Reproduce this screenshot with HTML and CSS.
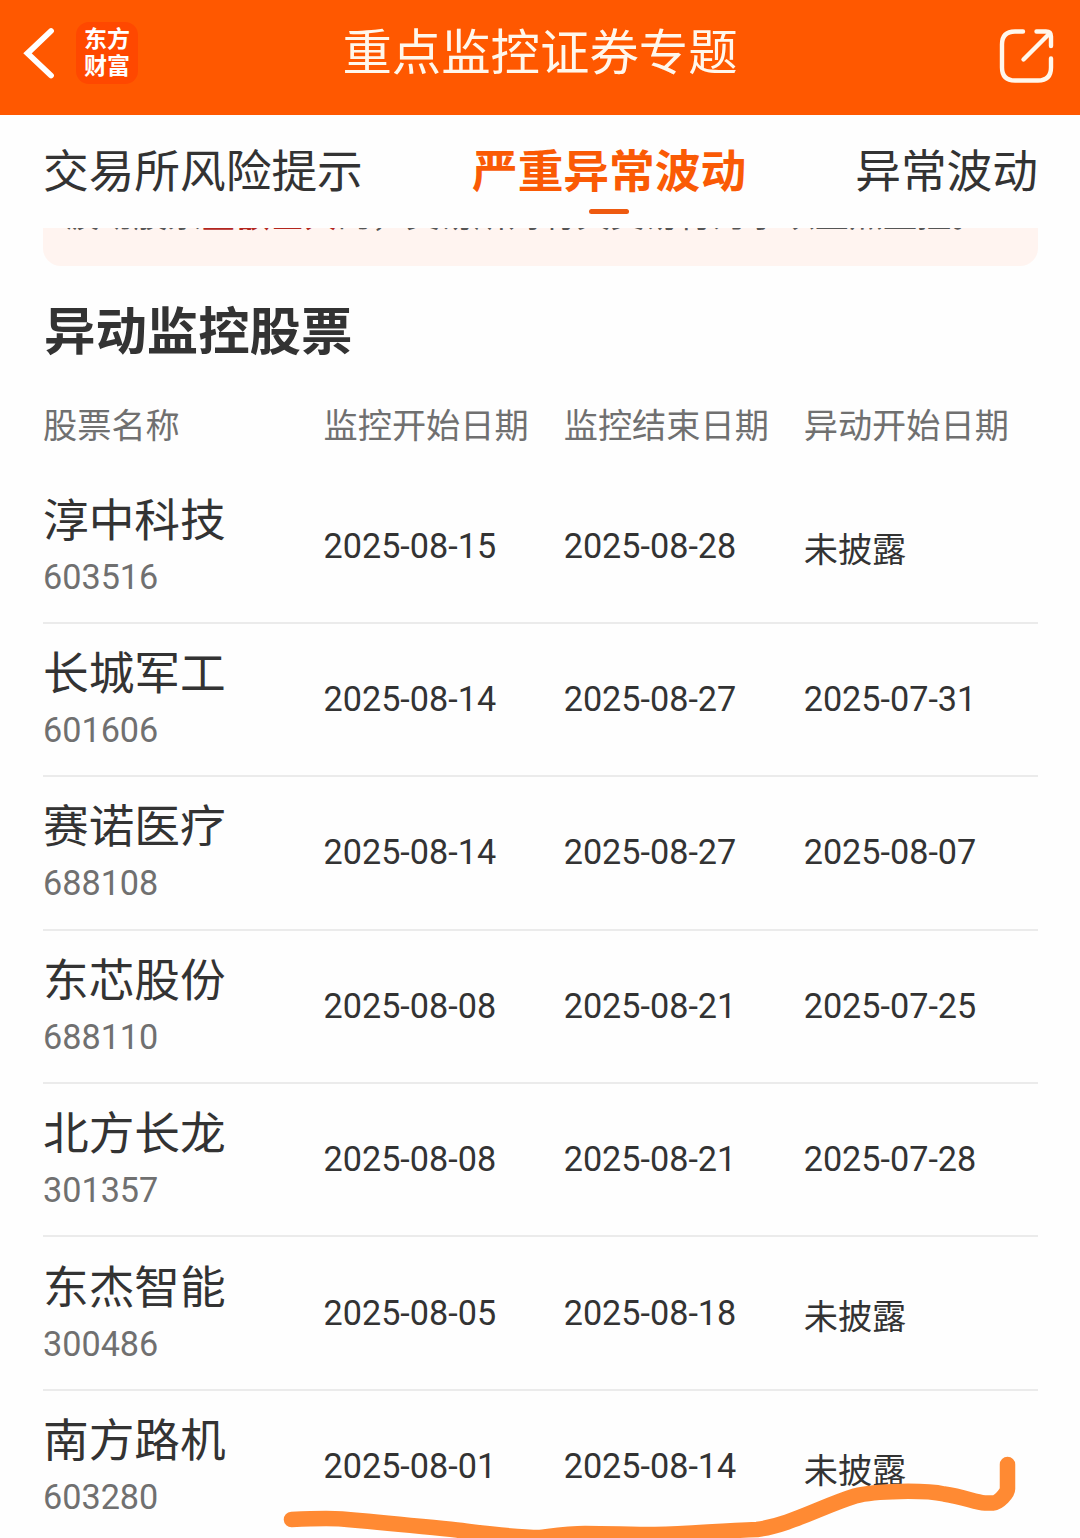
FILE: index.html
```html
<!DOCTYPE html>
<html lang="zh-CN">
<head>
  <meta charset="UTF-8">
  <meta name="viewport" content="width=device-width, initial-scale=1.0">
  <title>重点监控证券专题</title>
  <link rel="stylesheet" href="styles.css">
</head>
<body>
  <div class="page">
    <header class="topbar">
      <div class="left">
        <svg class="back" width="32" height="54" viewBox="0 0 32 54">
          <path d="M28 5 L4.500 27.300 L28 49.500" fill="none" stroke="#fff" stroke-width="5.8" stroke-linecap="round"/>
        </svg>
        <div class="logo"><span>东方</span><span>财富</span></div>
      </div>
      <h1>重点监控证券专题</h1>
      <svg class="share" width="60" height="60" viewBox="0 0 60 60">
        <g fill="none" stroke="#fff7ec" stroke-width="4.4" stroke-linecap="round" stroke-linejoin="round">
          <path d="M25 5.500 H17 Q4 5.500 4 18.500 V41.500 Q4 54.500 17 54.500 H40 Q53 54.500 53 41.500 V32.500"/>
          <path d="M38.500 5.500 H48 Q53 5.500 53 10.500 V20"/>
          <path d="M25.500 33.500 L51 8"/>
        </g>
      </svg>
    </header>

    <nav class="tabs">
      <a>交易所风险提示</a>
      <a class="active">严重异常波动</a>
      <a>异常波动</a>
    </nav>

    <div class="notice">
      <p>波动股票<em>金额巨大</em>的，交易所对有关交易行为予以重点监控。</p>
    </div>

    <h2>异动监控股票</h2>

    <div class="table">
      <div class="row head">
        <div>股票名称</div>
        <div>监控开始日期</div>
        <div>监控结束日期</div>
        <div>异动开始日期</div>
      </div>
      <div class="row">
        <div class="stock"><b>淳中科技</b><span>603516</span></div>
        <div>2025-08-15</div>
        <div>2025-08-28</div>
        <div class="none">未披露</div>
      </div>
      <div class="row">
        <div class="stock"><b>长城军工</b><span>601606</span></div>
        <div>2025-08-14</div>
        <div>2025-08-27</div>
        <div>2025-07-31</div>
      </div>
      <div class="row">
        <div class="stock"><b>赛诺医疗</b><span>688108</span></div>
        <div>2025-08-14</div>
        <div>2025-08-27</div>
        <div>2025-08-07</div>
      </div>
      <div class="row">
        <div class="stock"><b>东芯股份</b><span>688110</span></div>
        <div>2025-08-08</div>
        <div>2025-08-21</div>
        <div>2025-07-25</div>
      </div>
      <div class="row">
        <div class="stock"><b>北方长龙</b><span>301357</span></div>
        <div>2025-08-08</div>
        <div>2025-08-21</div>
        <div>2025-07-28</div>
      </div>
      <div class="row">
        <div class="stock"><b>东杰智能</b><span>300486</span></div>
        <div>2025-08-05</div>
        <div>2025-08-18</div>
        <div class="none">未披露</div>
      </div>
      <div class="row">
        <div class="stock"><b>南方路机</b><span>603280</span></div>
        <div>2025-08-01</div>
        <div>2025-08-14</div>
        <div class="none">未披露</div>
      </div>
    </div>

    <!-- marker stroke drawn over the last row -->
    <svg class="marker" width="1080" height="118" viewBox="0 0 1080 118">
      <path d="M291.500 99.500 C312 98.500 330 98 342 99 C390 103 425 107 457 110 C490 114 515 117.500 540 117.500 C560 115 570 113.500 585 113.500 C610 113.500 630 114.500 655 114.500 C690 114 715 111 757 109.500 C790 105 820 87 855 76 C875 70.500 925 70 944 74 C965 77 975 82.500 985 83 H993 C999 82.500 1007.500 73 1007.500 69 V44.500"/>
    </svg>
  </div>
</body>
</html>
```
FILE: styles.css
```css
body {
  margin: 0;
  background-color: #fefefe;
  color: #333;
  font-family: Roboto, "Noto Sans CJK SC", sans-serif;
}

.page {
  position: relative;
  width: 1080px;
  height: 1538px;
  overflow: hidden;
}

.topbar {
  display: grid;
  grid-template-columns: 200px 1fr 200px;
  height: 115px;
  background-color: #ff5800;
}

.left {
  display: flex;
  align-items: flex-start;
  padding: 22px 0 0 23px;
}

.back {
  margin-top: 4px;
}

.logo {
  display: flex;
  flex-direction: column;
  box-sizing: border-box;
  width: 62px;
  height: 62px;
  margin-left: 21px;
  padding-top: 4px;
  border-radius: 13px;
  background-color: #ff4800;
  color: #fff;
  font-size: 23px;
  font-weight: 700;
  line-height: 27px;
  text-align: center;
}

h1 {
  margin: 0;
  color: #fff7ec;
  font-size: 49.4px;
  font-weight: 400;
  line-height: 107px;
  text-align: center;
}

.share {
  justify-self: end;
  margin: 26px 22px 0 0;
}

.tabs {
  display: flex;
  justify-content: space-between;
  height: 113px;
  padding: 0 42px 0 43px;
  font-size: 45.7px;
  line-height: 115px;
}

.tabs .active {
  display: flex;
  flex-direction: column;
  align-items: center;
  color: #fa5a05;
  font-weight: 700;
}

.tabs .active::after {
  content: "";
  width: 40px;
  height: 5px;
  margin-top: -21px;
  border-radius: 3px;
  background-color: #ee5a10;
}

/* only the bottom edge of the notice is left under the tabs */
.notice {
  display: flex;
  align-items: flex-end;
  height: 38px;
  margin: 0 42px 0 43px;
  padding-left: 22px;
  border-radius: 0 0 18px 18px;
  background-color: #fff4f0;
  overflow: hidden;
}

.notice p {
  margin: 0 0 26px;
  color: #555;
  font-size: 34.1px;
  line-height: 50px;
  white-space: nowrap;
}

.notice em {
  color: #b3261e;
  font-style: normal;
  font-weight: 700;
}

h2 {
  margin: 29px 0 0 44px;
  font-size: 51.4px;
  font-weight: 700;
  line-height: 76px;
}

.table {
  margin: 0 42px 0 43px;
}

.row {
  display: grid;
  grid-template-columns: 280.5px 240.2px 240px 1fr;
  align-items: center;
  box-sizing: border-box;
  height: 153.4px;
  padding-bottom: 1px;
  border-bottom: 2px solid #ebebeb;
  font-size: 34.2px;
  line-height: 50px;
}

.row:last-child {
  border-color: transparent;
}

.head {
  height: 99.5px;
  padding-top: 11px;
  border-bottom: none;
  color: #707070;
}

.stock {
  display: flex;
  flex-direction: column;
  padding-bottom: 4px;
}

.stock b {
  font-size: 45.7px;
  font-weight: 400;
  line-height: 66px;
}

.stock span {
  color: #707070;
  line-height: 44px;
}

.none {
  padding-top: 9px;
}

.marker {
  position: absolute;
  left: 0;
  bottom: 0;
}

.marker path {
  fill: none;
  stroke: #ff8a33;
  stroke-width: 15.5px;
  stroke-linecap: round;
  stroke-linejoin: round;
}
```
